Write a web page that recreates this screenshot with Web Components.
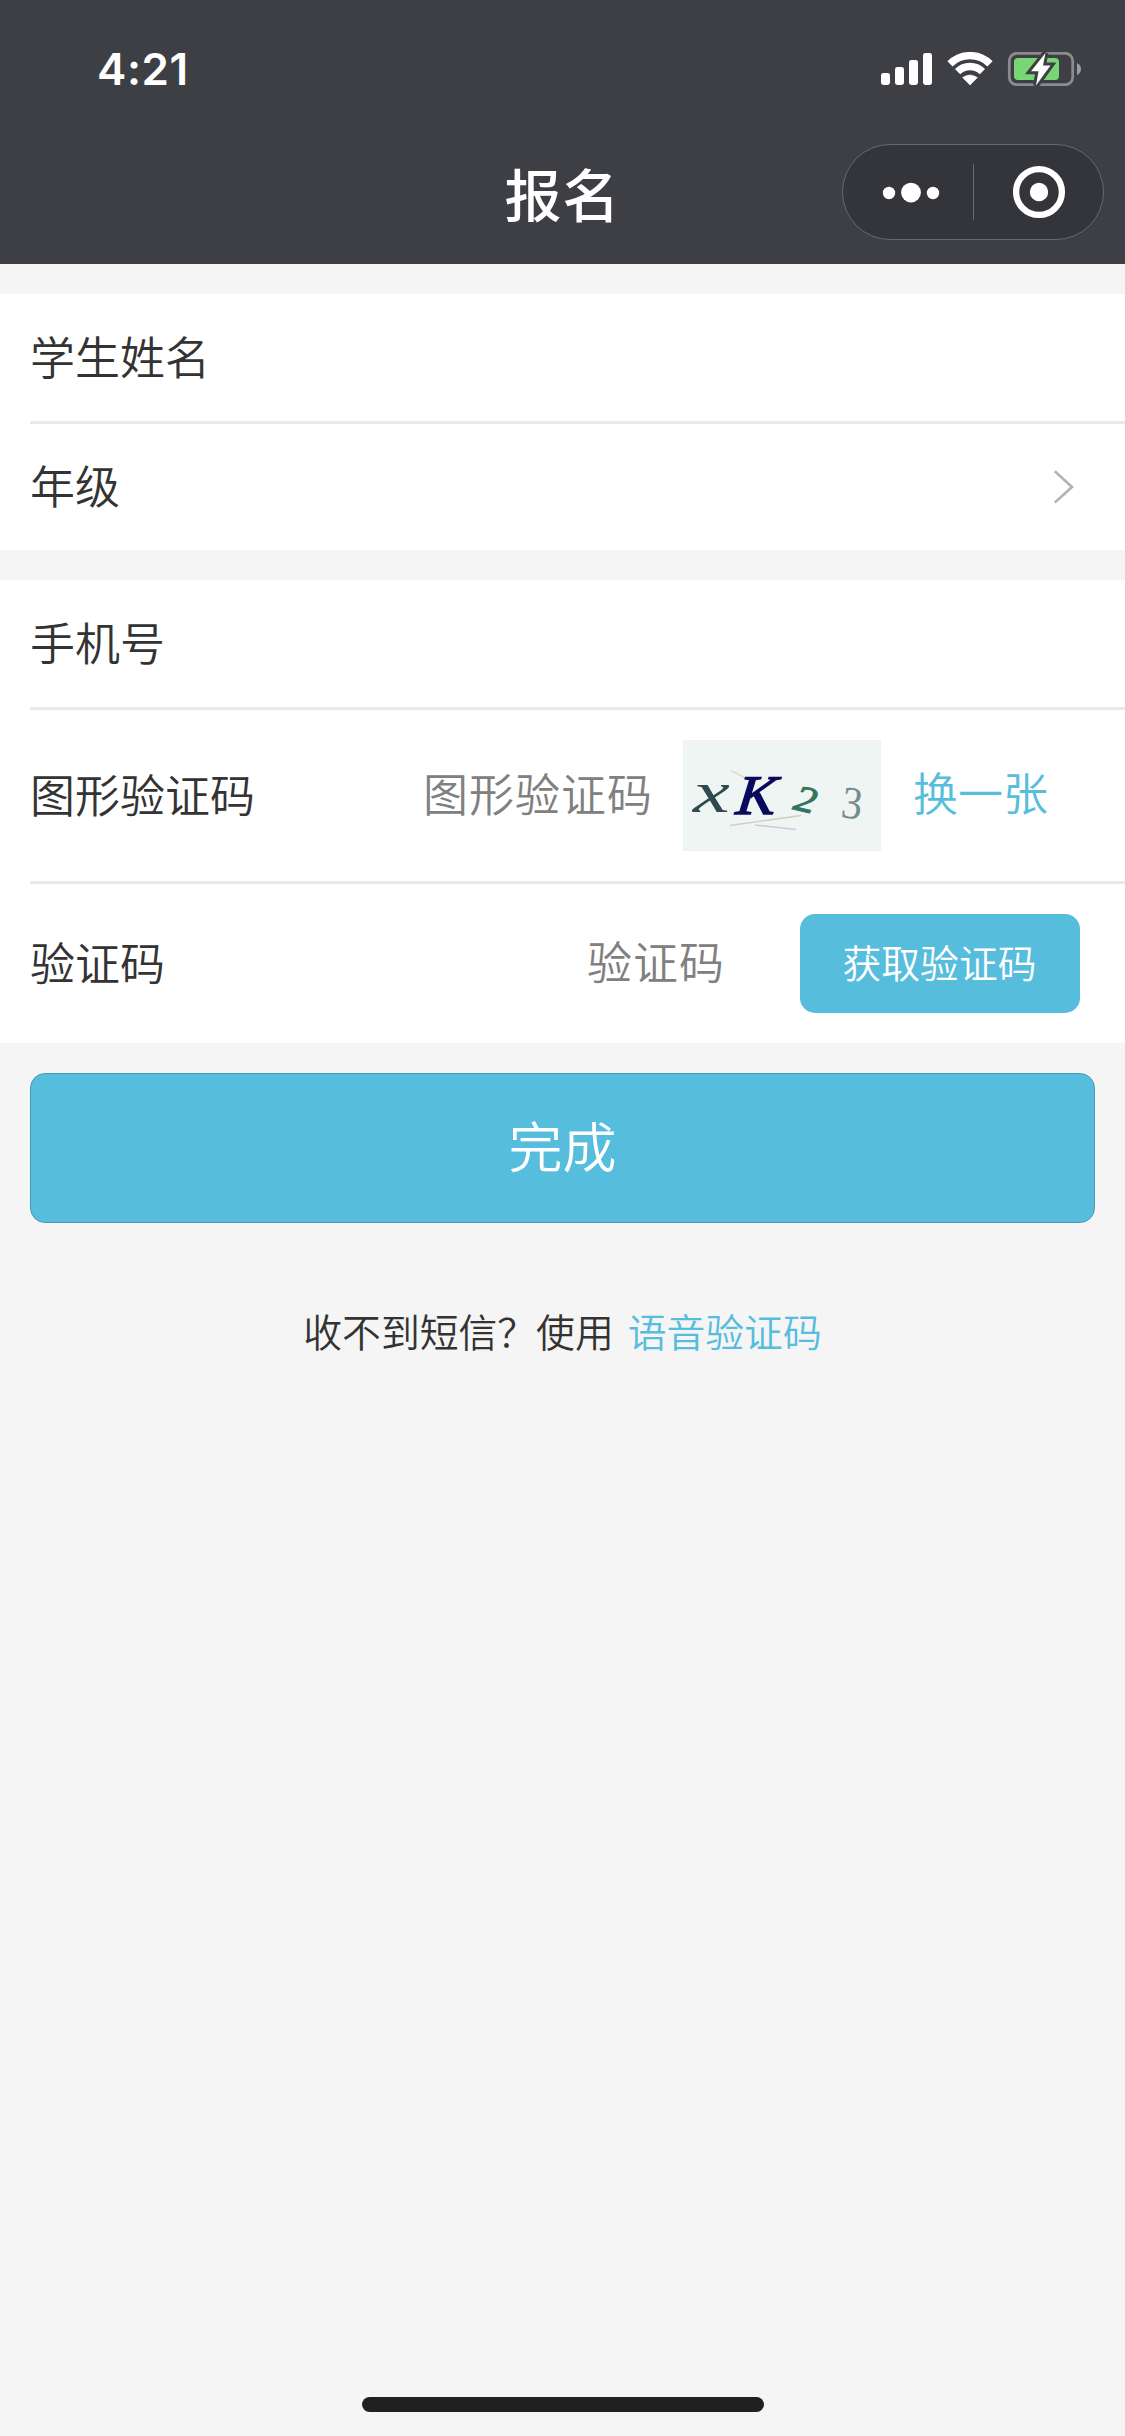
<!DOCTYPE html>
<html lang="zh-CN">
<head>
<meta charset="utf-8">
<title>报名</title>
<style>
  html, body { margin: 0; }
  body {
    background: #f5f5f5;
    color: #333;
    font-family: "Noto Sans CJK SC", sans-serif;
    font-size: 45px;
    font-weight: 350;
    line-height: 1;
  }
</style>
</head>
<body>
<signup-page></signup-page>
<script>
const define = (name, html) => {
  const t = document.createElement('template');
  t.innerHTML = html;
  customElements.define(name, class extends HTMLElement {
    constructor() {
      super();
      this.attachShadow({ mode: 'open' }).appendChild(t.content.cloneNode(true));
    }
  });
};

define('status-bar', `
<style>
  :host { display: flex; justify-content: space-between; height: 132px; box-sizing: border-box; padding: 47px 44px 0 97px; color: #fff; }
  .time { font: 600 44px/44px Inter, sans-serif; letter-spacing: .6px; }
  svg { display: block; margin-top: 5px; }
</style>
<span class="time">4:21</span>
<svg width="200" height="34" viewBox="881 52 200 34">
  <g fill="#fff">
    <rect x="881" y="73" width="9" height="12" rx="2.4"/>
    <rect x="895" y="67" width="9" height="18" rx="2.4"/>
    <rect x="909" y="60" width="9" height="25" rx="2.4"/>
    <rect x="923" y="53" width="9" height="32" rx="2.4"/>
    <path d="M970 85 L962.6 77.6 Q970 72.4 977.4 77.6 Z" stroke="#fff" stroke-width=".6" stroke-linejoin="round"/>
  </g>
  <g fill="none" stroke="#fff" stroke-width="7.4">
    <path d="M957.6 71.6 A17.5 17.5 0 0 1 982.4 71.6"/>
    <path d="M950 63.9 A28.3 28.3 0 0 1 990 63.9"/>
  </g>
  <rect x="1009.3" y="53.3" width="63.4" height="31.4" rx="7.5" fill="none" stroke="#8a8b8f" stroke-width="2.8"/>
  <path d="M1077 63 Q1081 65 1081 69 T1077 75.2 Z" fill="#9c9c9f"/>
  <rect x="1014" y="58" width="45" height="22" rx="4" fill="#78d774"/>
  <path d="M1045.5 53 L1031 71.3 H1038.5 L1036 85.5 L1050.5 65.5 H1043 Z" fill="#3e3f44" stroke="#3e3f44" stroke-width="6"/>
  <path d="M1045.5 53 L1031 71.3 H1038.5 L1036 85.5 L1050.5 65.5 H1043 Z" fill="#fff"/>
</svg>`);

define('menu-capsule', `
<style>
  :host { display: block; width: 262px; height: 96px; }
  svg { display: block; }
</style>
<svg width="262" height="96" viewBox="842 144 262 96">
  <rect x="842.5" y="144.5" width="261" height="95" rx="47.5" fill="#34353a" stroke="#68696d"/>
  <rect x="973" y="164" width="1" height="56" fill="#68696d"/>
  <g fill="#fff">
    <circle cx="889" cy="193" r="6.2"/><circle cx="911" cy="192.6" r="9.9"/><circle cx="933" cy="193" r="6.2"/>
    <circle cx="1039" cy="192" r="9.2"/>
  </g>
  <circle cx="1039" cy="192" r="22.9" fill="none" stroke="#fff" stroke-width="6.3"/>
</svg>`);

define('nav-bar', `
<style>
  :host { display: grid; grid-template-columns: 283px 1fr 283px; height: 132px; box-sizing: border-box; padding-top: 12px; color: #fff; }
  .title { grid-column: 2; text-align: center; font-size: 57px; line-height: 96px; font-weight: 500; letter-spacing: 1px; }
</style>
<span class="title"><slot></slot></span>
<menu-capsule></menu-capsule>`);

define('form-group', `
<style>:host { display: block; background: #fff; margin-top: 30px; }</style>
<slot></slot>`);

define('form-row', `
<style>
  :host { display: block; padding-left: 30px; }
  .row { display: flex; align-items: center; height: var(--row-height, 127px); padding-right: 45px; }
  .label { flex: 1; padding-bottom: var(--label-lift, 4px); }
  .rule { display: none; height: 3px; background: #e9e9e9; }
  :host([line]) .rule { display: block; }
</style>
<div class="row"><span class="label"><slot name="label"></slot></span><slot></slot></div>
<div class="rule"></div>`);

define('chevron-right', `
<style>:host { display: block; margin-right: 6px; } svg { display: block; }</style>
<svg width="20" height="34" viewBox="0 0 20 34"><path d="M.8 1.2 L18 17 L.8 32.6" fill="none" stroke="#b4b4b4" stroke-width="2.7"/></svg>`);

define('hint-text', `
<style>:host { display: block; color: #808080; letter-spacing: 1px; padding-bottom: 7px; }</style>
<slot></slot>`);

define('text-link', `
<style>:host { color: #57bddd; }</style><slot></slot>`);

define('captcha-image', `
<style>:host { display: block; margin: 0 32px 0 30px; } svg { display: block; } text { font-family: "Liberation Serif", serif; }</style>
<svg width="198" height="111" viewBox="0 0 198 111">
  <rect width="198" height="111" fill="#eff5f3"/>
  <g fill="none" stroke-width="1.3">
    <path d="M48 30.5 L67 40.5" stroke="#dccbd2"/>
    <path d="M47 85.5 L118 75.5" stroke="#d2ccc4"/>
    <path d="M72 85 L113 89.5" stroke="#d8c5dc"/>
  </g>
  <text transform="translate(10 72) scale(1.38 1)" font-size="60" font-style="italic" fill="#2f4a4c">x</text>
  <text transform="translate(52 74) skewX(-7) scale(1.05 1)" font-size="56" font-style="italic" fill="#0a0a5c" stroke="#0a0a5c" stroke-width="1.4">K</text>
  <text transform="translate(109 69) rotate(13) scale(1.2 1)" font-size="37" font-style="italic" fill="#367461" stroke="#367461" stroke-width="1">2</text>
  <text transform="translate(157 77) rotate(7) scale(.9 1)" font-size="46" fill="#738c8e">3</text>
</svg>`);

define('code-button', `
<style>
  :host { display: flex; align-items: center; justify-content: center; width: 280px; height: 99px; box-sizing: border-box; padding: 0 1px 5px 0; margin-left: 75px; border-radius: 15px; background: #57bddd; color: #fff; font-size: 38.8px; }
</style><slot></slot>`);

define('submit-button', `
<style>
  :host { display: flex; align-items: center; justify-content: center; height: 150px; box-sizing: border-box; padding-bottom: 7px; margin: 30px 30px 0; border: 1.5px solid #469ab5; border-radius: 15px; background: #57bddd; color: #fff; font-size: 54px; }
</style><slot></slot>`);

define('home-indicator', `
<style>:host { display: block; width: 402px; height: 15px; border-radius: 8px; background: #202020; margin: auto auto 24px; }</style>`);

define('signup-page', `
<style>
  :host { display: flex; flex-direction: column; width: 1125px; height: 2436px; overflow: hidden; background: #f5f5f5; }
  header { background: #3e3f44; }
  .grade { --row-height: 126px; --label-lift: 6px; }
  .captcha { --row-height: 171px; }
  .code { --row-height: 159px; }
  .again { margin-right: 32px; padding-bottom: 9px; }
  .voice { display: flex; justify-content: center; gap: 14px; margin-top: 88px; font-size: 38.8px; }
</style>
<header><status-bar></status-bar><nav-bar>报名</nav-bar></header>
<form-group>
  <form-row line><span slot="label">学生姓名</span></form-row>
  <form-row class="grade"><span slot="label">年级</span><chevron-right></chevron-right></form-row>
</form-group>
<form-group>
  <form-row line><span slot="label">手机号</span></form-row>
  <form-row line class="captcha"><span slot="label">图形验证码</span><hint-text>图形验证码</hint-text><captcha-image></captcha-image><text-link class="again">换一张</text-link></form-row>
  <form-row class="code"><span slot="label">验证码</span><hint-text>验证码</hint-text><code-button>获取验证码</code-button></form-row>
</form-group>
<submit-button>完成</submit-button>
<div class="voice"><span>收不到短信？使用</span><text-link>语音验证码</text-link></div>
<home-indicator></home-indicator>`);
</script>
</body>
</html>
